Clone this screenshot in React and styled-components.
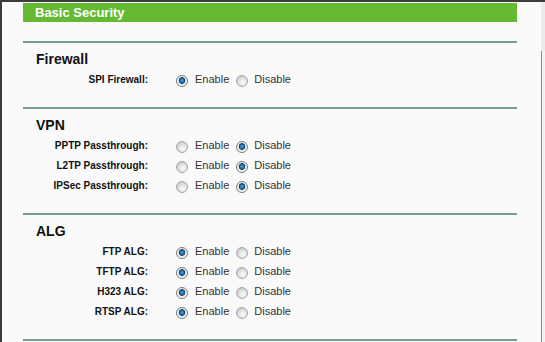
import React from 'react';
import styled, { createGlobalStyle } from 'styled-components';

const GlobalStyle = createGlobalStyle`
  html, body {
    margin: 0;
    padding: 0;
    background: #fafafa;
  }
  body {
    font-family: "Liberation Sans", Arial, sans-serif;
  }
`;

const Frame = styled.div`
  display: flex;
  width: 545px;
  height: 342px;
  border-top: 2px solid #3c3c3c;
  box-sizing: border-box;
  overflow: hidden;
`;

const Main = styled.div`
  flex: 1;
  border-left: 2px solid #3c3c3c;
  padding: 1px 0 0 21px;
  background: #fafafa;
`;

const Side = styled.div`
  width: 4px;
  display: flex;
  flex-direction: column;
`;

const SideTop = styled.div`
  height: 49px;
  background: #ececec;
`;

const SideRail = styled.div`
  flex: 1;
  border-left: 1px solid #8c8c8c;
  background: #f2f2f2;
`;

const Content = styled.div`
  width: 494px;
`;

const TitleBar = styled.div`
  height: 19px;
  background: #66b933;
  color: #fff;
  font-weight: bold;
  font-size: 13px;
  line-height: 19px;
  padding-left: 12px;
  margin-bottom: 19px;
`;

const Section = styled.section`
  border-top: 2px solid #72a090;
  padding: 7px 0 18px;
`;

const Heading = styled.h3`
  margin: 0 0 1px;
  padding-left: 13px;
  font-size: 14px;
  line-height: 18px;
  font-weight: bold;
  color: #111;
`;

const Row = styled.div`
  display: flex;
  align-items: center;
  height: 20px;
`;

const Label = styled.div`
  width: 125px;
  text-align: right;
  font-size: 10px;
  font-weight: bold;
  color: #111;
  margin-right: 28px;
  white-space: nowrap;
`;

const Radio = styled.span`
  display: inline-block;
  width: 12px;
  height: 12px;
  box-sizing: border-box;
  border-radius: 50%;
  margin-top: 4px;
  margin-right: ${p => p.$gap}px;
  border: 1px solid ${p => (p.$checked ? '#7b7b7b' : '#a6a6a6')};
  background: ${p =>
    p.$checked
      ? 'radial-gradient(circle at 50% 45%, #5fa8d8 0, #1c6aa3 2px, #0d3f68 3px, #e8e8e8 3.6px, #f4f4f4 5px)'
      : 'radial-gradient(circle at 60% 65%, #fbfbfb 0, #e2e2e2 4px, #cfcfcf 6px)'};
`;

const Option = styled.span`
  font-size: 11px;
  color: #333;
  margin-right: ${p => p.$gap}px;
`;

const sections = [
  {
    title: 'Firewall',
    rows: [{ label: 'SPI Firewall:', on: true }],
  },
  {
    title: 'VPN',
    rows: [
      { label: 'PPTP Passthrough:', on: false },
      { label: 'L2TP Passthrough:', on: false },
      { label: 'IPSec Passthrough:', on: false },
    ],
  },
  {
    title: 'ALG',
    rows: [
      { label: 'FTP ALG:', on: true },
      { label: 'TFTP ALG:', on: true },
      { label: 'H323 ALG:', on: true },
      { label: 'RTSP ALG:', on: true },
    ],
  },
];

function SettingRow({ label, on }) {
  return (
    <Row>
      <Label>{label}</Label>
      <Radio $checked={on} $gap={7} />
      <Option $gap={7}>Enable</Option>
      <Radio $checked={!on} $gap={6} />
      <Option>Disable</Option>
    </Row>
  );
}

export default function App() {
  return (
    <>
      <GlobalStyle />
      <Frame>
        <Main>
          <Content>
            <TitleBar>Basic Security</TitleBar>
            {sections.map(s => (
              <Section key={s.title}>
                <Heading>{s.title}</Heading>
                {s.rows.map(r => (
                  <SettingRow key={r.label} {...r} />
                ))}
              </Section>
            ))}
            <Section />
          </Content>
        </Main>
        <Side>
          <SideTop />
          <SideRail />
        </Side>
      </Frame>
    </>
  );
}
